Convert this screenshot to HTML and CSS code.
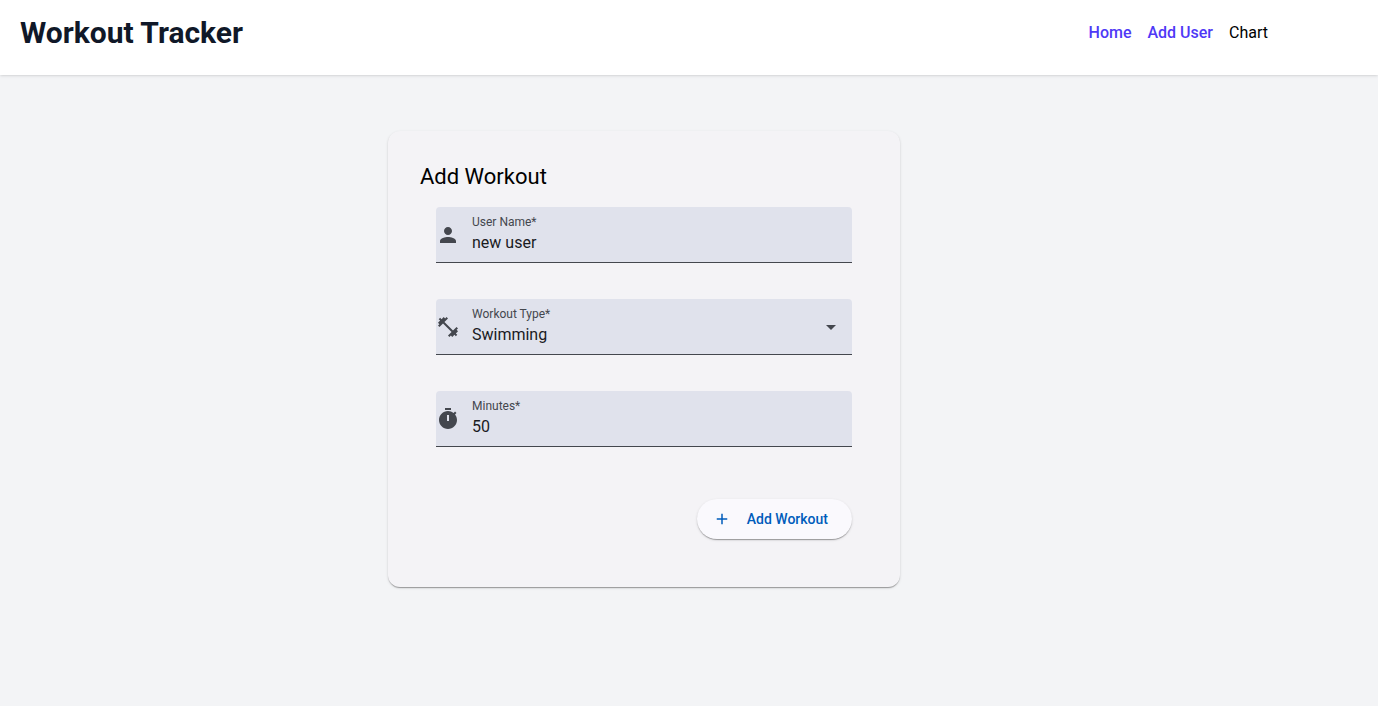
FILE: index.html
```html
<!DOCTYPE html>
<html lang="en">
<head>
  <meta charset="utf-8">
  <meta name="viewport" content="width=device-width, initial-scale=1">
  <title>Workout Tracker</title>
  <link rel="stylesheet" href="styles.css">
</head>
<body>
  <header class="header">
    <h1 class="brand">Workout Tracker</h1>
    <nav class="nav">
      <a class="nav-link nav-link-strong" href="#home">Home</a>
      <a class="nav-link nav-link-strong" href="#add-user">Add User</a>
      <a class="nav-link" href="#chart">Chart</a>
    </nav>
  </header>
  <main class="main">
    <section class="card">
      <h2 class="card-title">Add Workout</h2>
      <form class="form">
        <div class="field">
          <svg class="icon" viewBox="0 0 24 24" aria-hidden="true"><path d="M12 12c2.21 0 4-1.79 4-4s-1.79-4-4-4-4 1.79-4 4 1.79 4 4 4zm0 2c-2.67 0-8 1.34-8 4v2h16v-2c0-2.66-5.33-4-8-4z"/></svg>
          <div class="field-body">
            <label class="label" for="user-name">User Name*</label>
            <input class="control" id="user-name" type="text" value="new user" required>
          </div>
        </div>
        <div class="field">
          <svg class="icon" viewBox="0 0 24 24" aria-hidden="true"><path d="M20.57 14.86L22 13.43 20.57 12 17 15.57 8.43 7 12 3.43 10.57 2 9.14 3.43 7.71 2 5.57 4.14 4.14 2.71 2.71 4.14l1.43 1.43L2 7.71l1.43 1.43L2 10.57 3.43 12 7 8.43 15.57 17 12 20.57 13.43 22l1.43-1.43L16.29 22l2.14-2.14 1.43 1.43 1.43-1.43-1.43-1.43L22 16.29z"/></svg>
          <div class="field-body">
            <label class="label" for="workout-type">Workout Type*</label>
            <select class="control" id="workout-type" required>
              <option>Running</option>
              <option>Cycling</option>
              <option selected>Swimming</option>
              <option>Yoga</option>
            </select>
          </div>
          <svg class="icon arrow" viewBox="0 0 24 24" aria-hidden="true"><path d="M7 10l5 5 5-5z"/></svg>
        </div>
        <div class="field">
          <svg class="icon" viewBox="0 0 24 24" aria-hidden="true"><path fill-rule="evenodd" d="M15 1H9v2h6V1zM11 14h2V8h-2v6zM19.03 7.39l1.42-1.42c-.43-.51-.9-.99-1.41-1.41l-1.42 1.42C16.07 4.74 14.12 4 12 4c-4.97 0-9 4.03-9 9s4.02 9 9 9 9-4.03 9-9c0-2.12-.74-4.07-1.97-5.61z"/></svg>
          <div class="field-body">
            <label class="label" for="minutes">Minutes*</label>
            <input class="control" id="minutes" type="text" inputmode="numeric" value="50" required>
          </div>
        </div>
        <div class="actions">
          <button class="button" type="submit">
            <svg class="button-icon" viewBox="0 0 24 24" aria-hidden="true"><path d="M19 13h-6v6h-2v-6H5v-2h6V5h2v6h6v2z"/></svg>
            Add Workout
          </button>
        </div>
      </form>
    </section>
  </main>
</body>
</html>
```
FILE: styles.css
```css
* {
  box-sizing: border-box;
}

body {
  margin: 0;
  min-height: 100vh;
  background: #f3f4f6;
  color: #000;
  font-family: Roboto, "Liberation Sans", sans-serif;
  font-size: 16px;
  line-height: 24px;
}

.header {
  display: flex;
  justify-content: space-between;
  align-items: center;
  padding: 15px 110px 24px 20px;
  background: #fff;
  box-shadow: 0 1px 3px rgba(0, 0, 0, 0.1), 0 1px 2px -1px rgba(0, 0, 0, 0.1);
}

.brand {
  margin: 0;
  color: #101828;
  font-size: 30px;
  line-height: 36px;
  font-weight: 700;
}

.nav {
  display: flex;
  gap: 16px;
}

.nav-link {
  color: #000;
  text-decoration: none;
}

.nav-link-strong {
  color: #4f39f6;
  font-weight: 500;
}

.main {
  padding: 56px 90px 56px 0;
}

.card {
  max-width: 512px;
  margin: 0 auto;
  padding: 32px 32px 48px;
  border-radius: 12px;
  background: #f4f3f6;
  box-shadow: 0 2px 1px -1px rgba(0, 0, 0, 0.2), 0 1px 1px rgba(0, 0, 0, 0.14), 0 1px 3px rgba(0, 0, 0, 0.12);
}

.card-title {
  margin: 0 0 16px;
  font-size: 22px;
  line-height: 28px;
  font-weight: 400;
}

.form {
  display: flex;
  flex-direction: column;
  gap: 36px;
  padding: 0 16px;
}

.field {
  display: flex;
  align-items: center;
  gap: 12px;
  height: 56px;
  border-bottom: 1px solid #44474e;
  border-radius: 4px 4px 0 0;
  background: #e0e2ec;
}

.icon {
  flex: none;
  width: 24px;
  height: 24px;
  fill: #44474e;
}

.field-body {
  display: flex;
  flex: 1;
  flex-direction: column;
  gap: 1px;
  min-width: 0;
}

.label {
  color: #44474e;
  font-size: 12px;
  line-height: 16px;
}

.control {
  width: 100%;
  height: 24px;
  margin: 0;
  padding: 0;
  border: 0;
  outline: 0;
  appearance: none;
  background: transparent;
  color: #1a1b1f;
  font: inherit;
}

.arrow {
  margin-right: 9px;
  pointer-events: none;
}

.actions {
  display: flex;
  justify-content: flex-end;
  padding-top: 16px;
}

.button {
  display: flex;
  align-items: center;
  gap: 16px;
  height: 40px;
  padding: 0 24px 0 16px;
  border: 0;
  border-radius: 20px;
  background: #faf9fd;
  color: #005cbb;
  font-family: inherit;
  font-size: 14px;
  line-height: 20px;
  font-weight: 500;
  box-shadow: 0 2px 1px -1px rgba(0, 0, 0, 0.2), 0 1px 1px rgba(0, 0, 0, 0.14), 0 1px 3px rgba(0, 0, 0, 0.12);
}

.button-icon {
  width: 18px;
  height: 18px;
  fill: currentColor;
}
```
